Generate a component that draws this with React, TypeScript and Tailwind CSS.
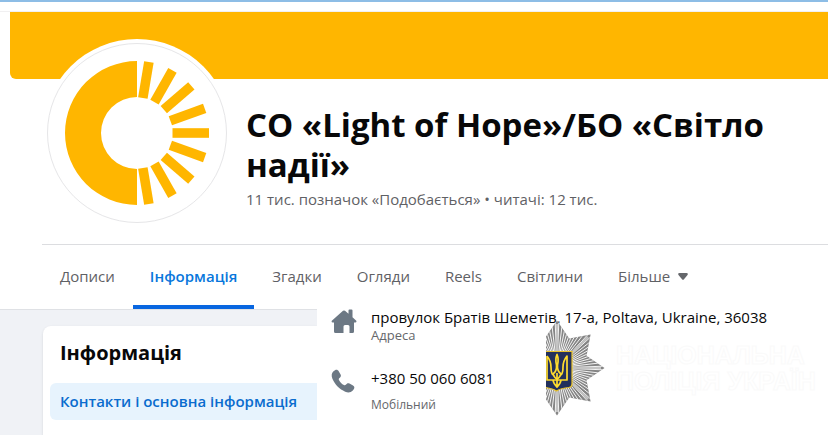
import type { ReactNode } from "react";

const SUN = "#ffb600";

function polar(cx: number, cy: number, r: number, deg: number): string {
  const a = (deg * Math.PI) / 180;
  return `${(cx + r * Math.cos(a)).toFixed(2)},${(cy + r * Math.sin(a)).toFixed(2)}`;
}

function SunLogo() {
  const rays = [-80.5, -60.5, -41, -20, 0, 20, 41, 60.5, 80.5];
  return (
    <svg viewBox="1 1 178 178" className="h-full w-full" role="img" aria-label="Light of Hope">
      <path d="M90 18A72 72 0 0 0 90 162V126A36 36 0 0 1 90 54Z" fill={SUN} />
      {rays.map((deg) => (
        <rect key={deg} x="125.500" y="85.200" width="36.500" height="9.600" fill={SUN} transform={`rotate(${deg} 90 90)`} />
      ))}
    </svg>
  );
}

function HouseIcon() {
  return (
    <svg viewBox="0 0 26 26" className="h-[26px] w-[26px]" fill="#6c7884" aria-hidden="true">
      <path d="M12 1.800Q13 1 14 1.800L17.500 4.700V1.400Q17.500.5 18.400.5H20.500Q21.500.5 21.500 1.400V8.200L25.300 11.800Q26 13.300 24.500 13.400H23V22.500Q23 24 21.500 24H18.500V17.500Q18.500 16 17 16H14Q12.500 16 12.500 17.500V24H4.500Q3 24 3 22.500V13.400H1.500Q0 13.300.8 11.800Z" />
    </svg>
  );
}

function PhoneIcon() {
  return (
    <svg viewBox="0 0 24 24" className="h-6 w-6" fill="#6c7884" aria-hidden="true">
      <path d="M2.500 2.300C4.500.2 6.500.1 7.700 2.200L9.600 5.600C10.500 7.300 9.500 8.300 8.200 9.300C7.600 9.900 7.700 10.500 8.100 11.200C9.200 13.300 10.800 15 12.900 16C13.600 16.400 14.200 16.400 14.800 15.800C15.900 14.400 16.900 13.700 18.500 14.600L22 16.500C24 17.700 23.800 19.600 21.800 21.500C19.800 23.600 17.300 24 14.200 22.700C8.500 20.200 3.800 15.500 1.400 9.800C.2 6.800.5 4.200 2.500 2.300Z" />
    </svg>
  );
}

function PoliceStar() {
  const cx = 11;
  const cy = 48;
  const outline = Array.from({ length: 16 }, (_, i) =>
    polar(cx, cy, i % 2 === 0 ? 47.5 : 32, i * 22.5 - 90),
  ).join(" ");
  const grooves = Array.from({ length: 80 }, (_, i) => i * 4.5 + 2.25);
  return (
    <svg viewBox="0 0 60 96" className="h-24 w-[60px] shrink-0" role="img" aria-label="Національна поліція України">
      <defs>
        <clipPath id="star">
          <polygon points={outline} />
        </clipPath>
      </defs>
      <polygon points={outline} fill="#858585" />
      <g clipPath="url(#star)" stroke="#f4f4f4" strokeWidth="1">
        {grooves.map((deg) => {
          const [x, y] = polar(cx, cy, 48, deg).split(",");
          return <line key={deg} x1={cx} y1={cy} x2={x} y2={y} />;
        })}
      </g>
      <g stroke="#c4c4c4" strokeWidth="2">
        <path d="M11 4V92M11 48H55M11 48L42 17M11 48L42 79" />
      </g>
      <path d="M-5 31.500H26V64Q26 67 23 67.500Q15 68 10.500 71Q6 68-5 67Z" fill="#22305c" stroke="#e8c22a" strokeWidth="1.200" />
      <g fill="none" stroke="#ffdc2e" strokeWidth="1.700" strokeLinejoin="round">
        <path d="M11 34.500Q9 39 10.500 45Q11 51 7 54Q8.500 58 11 59Q13.500 58 15 54Q11 51 11.500 45Q13 39 11 34.500Z" />
        <path d="M1 36V60H21V36Q17 41 17 47Q17 53 15 55M1 36Q5 41 5 47Q5 53 7 55M11 53V67M7 60Q7.500 64 11 67Q14.500 64 15 60" />
      </g>
    </svg>
  );
}

const tabs = ["Дописи", "Інформація", "Згадки", "Огляди", "Reels", "Світлини"];

function Tabs() {
  return (
    <nav className="ml-[43px] flex h-16 gap-px text-[15px] font-medium text-[#5f6165]">
      {tabs.map((label) => {
        const active = label === "Інформація";
        return (
          <a
            key={label}
            href="#"
            aria-current={active ? "page" : undefined}
            className={
              active
                ? "flex items-center border-b-4 border-[#0866e0] px-[17px] pt-0.5 font-semibold text-[#0877dc]"
                : "flex items-center px-[17px] pb-0.5"
            }
          >
            {label}
          </a>
        );
      })}
      <button type="button" className="flex items-center gap-2 px-[17px] pb-0.5">
        Більше
        <svg viewBox="0 0 10 7" className="h-[7px] w-[10px]" fill="#65676b" aria-hidden="true">
          <path d="M1.500 0H8.500Q10.500.3 9.500 2L6 6.200Q5 7.300 4 6.200L.5 2Q-.5.3 1.500 0Z" />
        </svg>
      </button>
    </nav>
  );
}

function Contact({ icon, children }: { icon: ReactNode; children: ReactNode }) {
  return (
    <div className="flex gap-[14px]">
      <div className="w-[26px] shrink-0">{icon}</div>
      <div>{children}</div>
    </div>
  );
}

export default function App() {
  return (
    <div className="min-h-screen bg-white font-['Open_Sans','Noto_Sans',sans-serif]">
      <div className="h-[2px] bg-[#8dbde6]" />
      <header>
        <div className="mt-[9px] border-t border-[#f1f0f1]">
          <div className="ml-[10px] h-[67px] rounded-bl-md bg-[#ffb600]" />
        </div>
        <div className="flex pl-[43px]">
          <div className="relative -mt-10 h-[188px] w-[188px] shrink-0 rounded-full bg-white p-1">
            <div className="h-[180px] w-[180px] rounded-full border border-[#e6e6e8]">
              <SunLogo />
            </div>
          </div>
          <div className="ml-[15px] pt-[26px]">
            <h1 className="max-w-[540px] text-[33px] leading-10 font-bold text-[#080809]">
              СО «Light of Hope»/БО «Світло надії»
            </h1>
            <p className="mt-1 text-[15px] leading-5 font-medium text-[#5f6165]">
              11 тис. позначок «Подобається» • читачі: 12 тис.
            </p>
          </div>
        </div>
      </header>
      <div className="mt-[17px] ml-[42px] border-t border-[#dcdde0]" />
      <Tabs />
      <main className="flex">
        <aside className="w-[317px] shrink-0 overflow-hidden border-t border-[#dfe1e5] bg-[#f0f2f6] pt-4 pl-[43px]">
          <div className="rounded-tl-lg bg-white pt-[11px] pb-[15px] pl-[7px] shadow-sm">
            <h2 className="pl-[10px] text-xl leading-8 font-bold text-[#080809]">Інформація</h2>
            <a
              href="#"
              className="mt-[14px] flex h-[37px] items-center rounded-l-md bg-[#e7f3fd] pl-[10px] text-[15px] font-semibold text-[#0a6cce]"
            >
              Контакти і основна інформація
            </a>
          </div>
        </aside>
        <section className="relative min-w-0 grow pl-[14px]">
          <Contact icon={<HouseIcon />}>
            <p className="text-[15px] leading-4 text-[#080809]">
              провулок Братів Шеметів, 17-а, Poltava, Ukraine, 36038
            </p>
            <p className="text-[13px] leading-5 text-[#65676b]">Адреса</p>
          </Contact>
          <div className="h-6" />
          <Contact icon={<PhoneIcon />}>
            <p className="text-[15px] leading-[18px] text-[#080809]">+380 50 060 6081</p>
            <p className="mt-2 text-xs leading-5 text-[#65676b]">Мобільний</p>
          </Contact>
          <div className="absolute top-[11px] left-[229px] flex items-center gap-[10px]">
            <PoliceStar />
            <p className="font-['Liberation_Sans',sans-serif] text-[25px] leading-[26px] font-bold whitespace-nowrap text-white [-webkit-text-stroke:1px_#fafafa]">
              НАЦІОНАЛЬНА
              <br />
              ПОЛІЦІЯ УКРАЇН
            </p>
          </div>
        </section>
      </main>
    </div>
  );
}
